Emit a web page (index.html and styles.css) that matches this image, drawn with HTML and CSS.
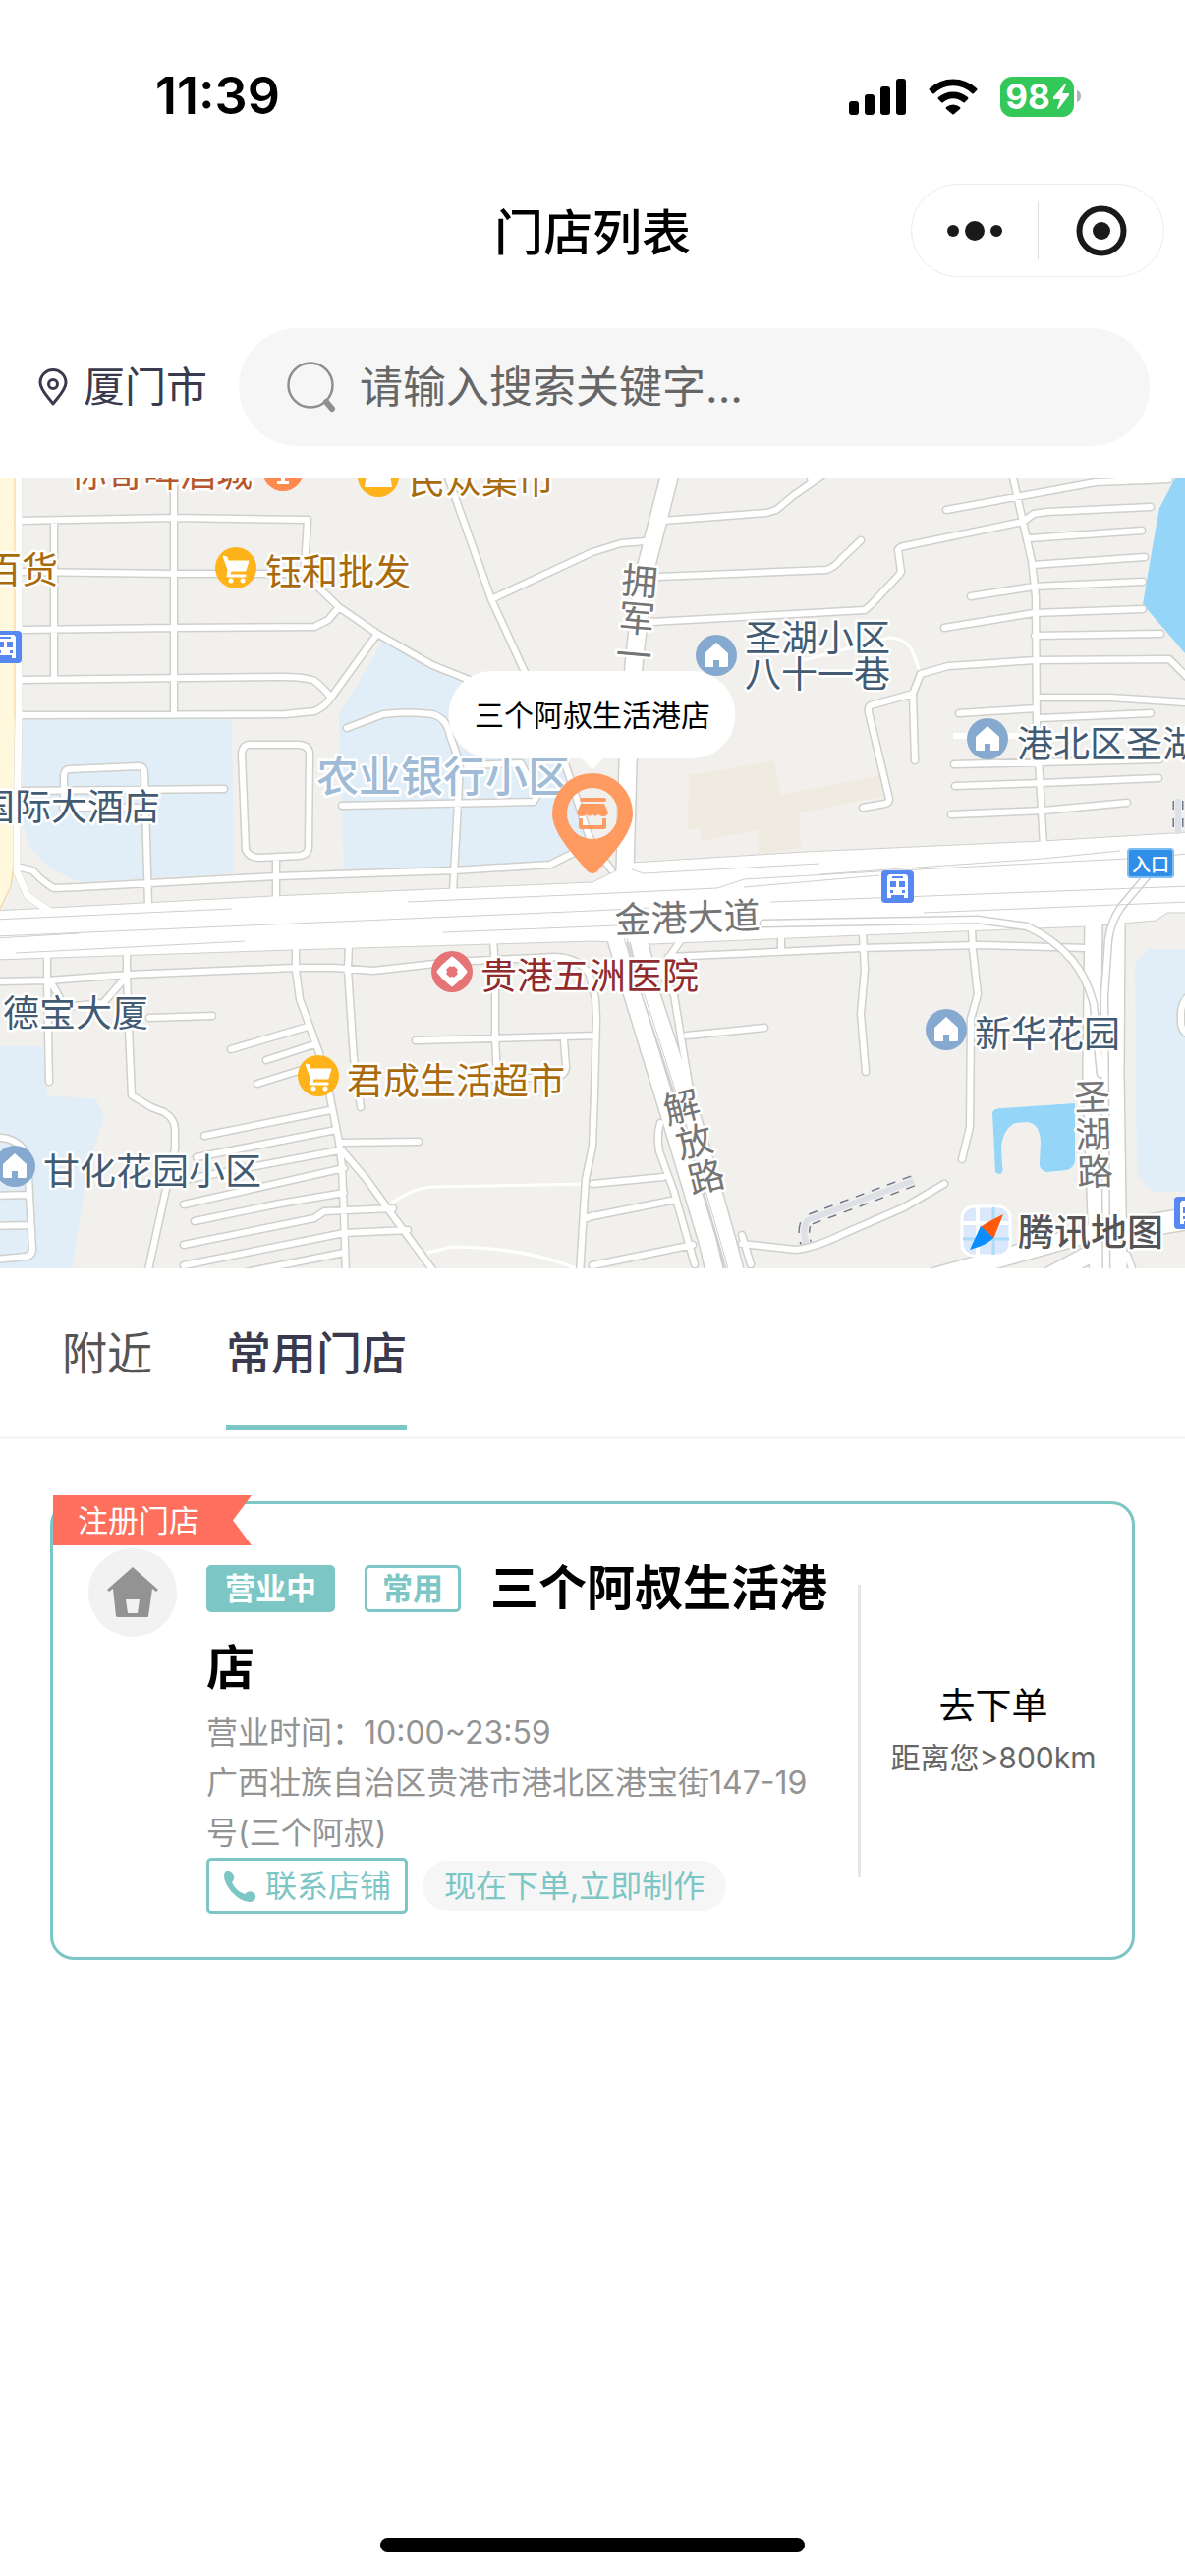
FILE: index.html
```html
<!DOCTYPE html>
<html lang="zh-CN">
<head>
<meta charset="utf-8">
<meta name="viewport" content="width=device-width, initial-scale=1">
<title>门店列表</title>
<link rel="stylesheet" href="styles.css">
</head>
<body>
<header>
  <div class="status-bar">
    <time class="clock">11:39</time>
    <div class="status-icons">
      <svg width="58" height="37" viewBox="0 0 58 37" aria-hidden="true">
        <rect x="0" y="23" width="10" height="14" rx="3"/>
        <rect x="16" y="16" width="10" height="21" rx="3"/>
        <rect x="32" y="8" width="10" height="29" rx="3"/>
        <rect x="48" y="0" width="10" height="37" rx="3"/>
      </svg>
      <svg width="50" height="37" viewBox="0 0 50 37" aria-hidden="true">
        <path d="M1 10 Q0 11 1 12 L4 15 Q5 16 6 15 A27 27 0 0 1 44 15 Q45 16 46 15 L49 12 Q50 11 49 10 A35 35 0 0 0 1 10Z"/>
        <path d="M10 19 Q9 20 10 21 L13 24 Q14 25 15 24 A15 15 0 0 1 35 24 Q36 25 37 24 L40 21 Q41 20 40 19 A23 23 0 0 0 10 19Z"/>
        <path d="M18 29 Q17 30 18 31 L24 36 Q25 37 26 36 L32 31 Q33 30 32 29 A11 11 0 0 0 18 29Z"/>
      </svg>
      <div class="battery">
        <span class="battery-level">98<svg width="16" height="26" viewBox="0 0 16 26" aria-hidden="true"><path d="M12 0 L0 14 Q-1 16 1 16 L7 16 L4 25 Q4 27 6 25 L16 12 Q17 10 15 10 L9 10 L13 1Z"/></svg></span>
        <svg class="battery-tip" width="4" height="12" viewBox="0 0 4 12" aria-hidden="true"><path d="M0 0 Q4 1 4 6 Q4 11 0 12Z"/></svg>
      </div>
    </div>
  </div>
  <div class="nav-bar">
    <h1 class="nav-title">门店列表</h1>
    <div class="capsule">
      <button type="button" class="capsule-button" aria-label="更多">
        <svg width="58" height="20" viewBox="0 0 58 20" aria-hidden="true"><circle cx="7" cy="10" r="6"/><circle cx="29" cy="10" r="10"/><circle cx="51" cy="10" r="6"/></svg>
      </button>
      <button type="button" class="capsule-button" aria-label="关闭">
        <svg width="52" height="52" viewBox="0 0 52 52" aria-hidden="true"><circle cx="26" cy="26" r="22.5" fill="none" stroke="#1a1a1a" stroke-width="6"/><circle cx="26" cy="26" r="9"/></svg>
      </button>
    </div>
  </div>
  <form class="search-row" role="search">
    <button type="button" class="city">
      <svg width="30" height="38" viewBox="0 0 30 38" fill="none" stroke="#3a3a4e" stroke-width="3" aria-hidden="true"><path d="M15 36 C10 29 2 22 2 14.5 A13 13 0 0 1 28 14.500 C28 22 20 29 15 36Z" stroke-linejoin="round"/><circle cx="15" cy="16" r="4.500"/></svg>
      厦门市
    </button>
    <label class="search-box">
      <svg width="50" height="52" viewBox="0 0 50 52" fill="none" stroke="#8f8f8f" aria-hidden="true"><circle cx="24" cy="24" r="22.500" stroke-width="2.500"/><path d="M40 41 L46 48" stroke-width="6" stroke-linecap="round"/></svg>
      <input class="search-input" type="search" aria-label="搜索门店" placeholder="请输入搜索关键字...">
    </label>
  </form>
</header>

<main>
  <svg class="map" viewBox="0 0 1206 804" role="img" aria-label="门店地图">
    <defs>
      <path id="lanes" d="M19 43 L177 40 L313 42 M177 -5 V240 M55 44 V204 M23 95 L177 97 L312 97 M23 154 L177 152 L320 151 L334 144 L345 131
        M313 42 L310 90 L319 106 L345 131 L384 158 L440 190 L500 214 M384 158 L337 223 M20 205 L285 202 Q312 202 320 206 Q328 212 337 223 M19 241 L290 240 L320 237 Q330 233 337 223
        M455 -4 L500 123 L540 210 M500 123 L603 75 L632 66 L657 64 M353 254 L390 240 Q415 237 440 240 Q455 244 458 262 L468 290 L466 330 L461 421
        M348 333 L543 329 L547 322 L530 290 L475 292 M575 290 L600 366 L612 385 L622 398
        M246 280 Q247 271 254 271 L304 271 Q315 272 315 280 L314 376 Q313 383 305 384 L264 386 Q254 386 250 378Z M281 386 V425
        M65 334 L65 302 Q66 296 70 296 L141 293 Q147 293 147 300 L151 434 M23 318 L228 316 M64 335 L147 335
        M21 396 L33 399 Q45 412 55 417 L80 416 L281 405 L462 399 L560 393 L594 376
        M674 43 L780 35 L790 32 L808 17 L840 -5 M824 -5 L826 4 M670 100 L841 93 Q850 90 855 83 L876 63
        M663 146 L880 134 L887 128 L915 98 L917 95 L914 73 Q915 70 920 69 L1041 44 L1052 36 L1065 34 L1171 29
        M1030 -5 L1041 44 L1050 84 L1054 120 L1055 250 L1062 374 M963 32 L1115 4 L1190 1 M1047 61 L1162 53 M1051 88 L1165 80 M988 120 L1052 110 L1163 105 M961 152 L1052 137 L1163 133 M1053 160 L1181 158
        M937 199 L965 191 L1053 185 L1190 184 L1208 202 M937 199 L929 219 L931 287 M929 219 L886 231 Q883 233 884 238 L905 326 Q905 330 901 331 L878 335
        M1055 223 L1130 223 L1208 228 M976 239 L1055 234 M1058 244 L1171 239 M971 291 L1180 286 M972 313 L1060 310 L1179 305 M968 342 L1062 338 L1147 330
        M-5 512 L48 511 L130 505 L300 498 L340 498 L380 501 L460 492 L565 487 Q590 488 600 505 L606 530 L607 550 L605 626 L603 680 L596 713 L590 810
        M48 482 V511 L50 614 M129 478 V505 L131 560 L134 628 L154 640 L167 645 Q178 652 178 662 L178 682 L150 810 M52 513 L66 538 L105 534 L126 510 M152 549 L216 547
        M301 475 L301 500 L305 530 L325 585 L335 625 L345 675 L348 700 L350 750 L352 810 M355 473 L354 500 L360 590 L367 640
        M235 581 L313 558 M271 592 L320 576 M262 616 L310 601 M208 669 L336 643 M200 691 L342 663 M192 713 L345 684 M187 739 L350 702 M198 756 L285 738 L350 727 M187 780 L320 753 L330 746 L400 743 M187 801 L350 768 L415 765 M250 808 L350 788
        M346 676 L426 675 M348 684 L372 712 L398 748 L445 812 M502 468 L504 500 L504 568 L506 610 M423 572 L607 567 M574 572 L576 598 Q576 607 566 609 L490 612
        M598 753 L603 750 M603 718 L675 711 M598 752 L688 734 M603 801 L705 780
        M-5 670 L8 672 Q25 678 28 692 L33 785 Q33 791 26 792 L-5 795 M-5 730 L28 729 M-5 761 L31 760
        M693 470 L672 500 L686 526 L697 593 L707 650 M672 656 Q668 668 671 685 L686 726 L707 800 M680 487 L876 478 L995 475 L1107 478 M795 466 V480 M878 464 L880 500 L876 545 L881 604 M989 458 L990 480 L995 525 L988 550 L987 660 L979 693
        M699 567 L778 559 M755 779 L810 785 Q830 783 860 768 L920 742 L961 718 M755 770 L764 800 M1147 790 L1154 810
        M1215 523 Q1202 530 1202 545 V555 Q1203 565 1215 568"/>
      <path id="roads" d="M682 -5 L655 100 L645 190 L639 290 L636 400 M953 812 L1110 768 M1060 816 L1112 788 M626 465 L644 526 L683 653 L720 776 L728 810 M649 465 L663 526 L705 653 L740 776 L749 810 M1113 448 L1111 606 L1118 810 M1136 448 L1135 606 L1138 810"/>
      <path id="ramps" d="M777 453 L995 449 L1045 456 Q1072 468 1091 490 Q1106 508 1113 535 L1120 606 M1168 404 L1141 436 Q1130 452 1128 470 L1124 526 L1126 810"/>
      <g id="home-poi"><circle r="21" fill="#86a9cf"/><path d="M0 -13 L12 -2 V11 Q12 12 10 12 H3 V5 H-3 V12 H-10 Q-12 12 -12 11 V-2Z" fill="#fff"/></g>
      <g id="cart-poi"><circle r="21" fill="#ffb31a"/><path d="M-13 -12 L-9 -11 L-8 -7 H13 L10 3 H-5 L-6 7 H10 V9 H-9 L-8 2Z" fill="#fff" stroke="#fff" stroke-linejoin="round"/><circle cx="-5" cy="13" r="2.500" fill="#fff"/><circle cx="7" cy="13" r="2.500" fill="#fff"/></g>
      <g id="bus-poi"><rect x="-16" y="-16" width="33" height="33" rx="4" fill="#5787f0"/><path d="M-8 -12 H9 L11 -10 V12 H7 V9 H-6 V12 H-10 V-10Z" fill="#fff"/><path d="M-5 -10 H6 V-8 H-5Z M-7 -5 H-1 V1 H-7Z M2 -5 H8 V1 H2Z M-7 4 H-4 V7 H-7Z M5 4 H8 V7 H5Z" fill="#5787f0"/></g>
    </defs>

    <rect width="1206" height="804" fill="#f1f0ed"/>
    <g fill="#e1eef8">
      <path d="M23 245 H236 L238 402 L85 411 Q45 400 28 370 L23 350Z"/>
      <path d="M390 165 L478 206 L577 286 L605 375 L560 392 L350 399 L345 240Z"/>
      <path d="M0 578 L43 578 L48 628 L98 632 L106 650 L90 700 L73 804 H0Z"/>
      <path d="M1168 479 H1206 V726 H1173 L1157 710 L1155 495Z"/>
    </g>
    <path d="M702 302 L788 287 L795 322 L896 302 L901 323 L813 341 L815 376 L772 382 L771 358 L713 369 V357 H699Z" fill="#efebe0"/>
    <g fill="#95d5f8">
      <path d="M1206 -2 H1197 L1180 30 L1172 75 L1163 128 L1206 178Z"/>
      <path d="M1010 645 Q1012 641 1020 641 L1094 636 V695 Q1092 703 1085 704 L1065 706 Q1057 703 1058 697 L1059 675 Q1058 656 1045 655 L1033 656 Q1021 662 1019 680 L1020 700 Q1022 707 1017 708 L1013 706Z"/>
    </g>
    <path d="M-2 -2 H15 V240 L18 320 L17 370 L11 415 L-2 442Z" fill="#fff8dc" stroke="#f3cf8c" stroke-width="1"/>
    <path d="M19 -5 V245 L17 360 V400 L28 425 L50 440" fill="none" stroke="#d2d2cf" stroke-width="8"/>
    <g fill="none" stroke="#fff" stroke-width="3">
      <path d="M818 185 L905 162 Q925 163 930 180 L937 199"/><path d="M398 738 Q420 722 440 721 L600 718"/><path d="M435 788 L460 782 Q540 783 590 806"/><path d="M970 262 L1175 262" stroke-width="6"/>
    </g>
    <g fill="none" stroke-linecap="round" stroke-linejoin="round">
      <use href="#lanes" stroke="#cfcfcc" stroke-width="9"/>
      <use href="#roads" stroke="#cfcfcc" stroke-width="20"/>
      <path d="M1140 765 L1212 753" stroke="#cfcfcc" stroke-width="24"/>
    </g>
    <path d="M-5 440 L277 425 L603 411 L643 391 L820 380 L1061 369 L1210 360 V442 H1188 L1176 450 L1107 456 L876 465 L664 474 L603 471 L296 480 L-5 490Z" fill="#fff" stroke="#cfcfcc" stroke-width="1"/>
    <g fill="none" stroke="#fff" stroke-linecap="round" stroke-linejoin="round">
      <use href="#roads" stroke-width="17"/>
      <use href="#lanes" stroke-width="6"/>
      <path d="M19 -5 V245 L17 360 V400 L28 425 L50 440" stroke-width="7"/>
      <path d="M1140 765 L1212 753" stroke-width="21"/>
      <use href="#ramps" stroke="#cfcfcc" stroke-width="9"/>
      <use href="#ramps" stroke-width="6"/>
    </g>
    <path d="M-5 449 L236 438 M-5 466 L603 440 L660 437 M784 431 L1210 415 M-5 468 L80 463 M415 431 L603 423 L730 417 L757 408 L895 400 L1147 387 L1210 382 M16 483 L249 471 M451 462 L603 456 L628 455 M940 442 L1210 431 M834 403 L1061 387 L1140 379 M757 416 L895 404 M643 398 L655 402 L834 392" fill="none" stroke="#cfcfcc"/>
    <g fill="none" stroke="#cfcfcc">
      <path d="M635 468 L653 526 L694 653 L731 776 L739 804 M638 468 L656 526 L697 653 L733 776 L741 804"/>
    </g>
    <g fill="none">
      <path d="M929 715 L822 755 Q816 762 820 778" stroke="#73778c" stroke-width="12" stroke-dasharray="9 8"/>
      <path d="M929 715 L822 755 Q816 762 820 778" stroke="#f1f0ed" stroke-width="9"/>
      <path d="M929 715 L822 755 Q816 762 820 778" stroke="#dde0e7" stroke-width="6"/>
      <path d="M1199 328 V360" stroke="#73778c" stroke-width="11" stroke-dasharray="9 9"/>
      <path d="M1199 326 V362" stroke="#f1f0ed" stroke-width="8"/>
      <path d="M1199 326 V362" stroke="#dde0e7" stroke-width="6"/>
    </g>

    <use href="#home-poi" x="729" y="180"/><use href="#home-poi" x="1005" y="265"/><use href="#home-poi" x="15" y="700"/><use href="#home-poi" x="963" y="561"/>
    <use href="#cart-poi" x="240" y="91"/><use href="#cart-poi" x="324" y="608"/>
    <use href="#bus-poi" x="5" y="171"/><use href="#bus-poi" x="913" y="415"/><use href="#bus-poi" x="1211" y="747"/>
    <circle cx="385" cy="-2" r="21" fill="#ffb31a"/><path d="M374 -10 H396 L399 9 H371Z" fill="#fff"/>
    <circle cx="288" cy="-8" r="21" fill="#ff8a50"/><path d="M286 -10 H290 V3 H294 V6 H282 V3 H286Z" fill="#fff"/>
    <circle cx="460" cy="502" r="21" fill="#e67476"/><path d="M460 488 L466 493 L469 496 L474 502 L469 508 L460 516 L451 508 L446 502 L451 496Z" fill="#fff" stroke="#fff" stroke-width="3" stroke-linejoin="round"/><path d="M460 497 V507 M455 502 H465 M456 498 L464 506 M464 498 L456 506" stroke="#e67476" stroke-width="6"/>
    <rect x="1148" y="377" width="46" height="29" rx="3" fill="#2f8fe8" stroke="#7ebcf2" stroke-width="2"/>
    <text x="1171" y="400" class="map-sign">入口</text>

    <g class="map-label shop"><text x="270" y="109">钰和批发</text><text x="-15" y="107">百货</text><text x="416" y="16">民众集市</text><text x="353" y="627">君成生活超市</text></g>
    <g class="map-label food"><text x="72" y="9">你哥啤酒城</text></g>
    <g class="map-label clinic"><text x="489" y="520">贵港五洲医院</text></g>
    <g class="map-label place"><text x="-22" y="348">国际大酒店</text><text x="758" y="176">圣湖小区</text><text x="758" y="213">八十一巷</text><text x="1035" y="284">港北区圣湖</text><text x="3" y="558">德宝大厦</text><text x="44" y="719">甘化花园小区</text><text x="992" y="579">新华花园</text></g>
    <text x="322" y="319" class="map-label area">农业银行小区</text>
    <g class="map-label road">
      <text transform="translate(626 463) rotate(-2)">金港大道</text>
      <g text-anchor="middle">
        <text transform="translate(650 118) rotate(5)">拥</text><text transform="translate(647 156) rotate(5)">军</text><text transform="translate(644 193) rotate(5)">一</text>
        <text transform="translate(697 653) rotate(-14)">解</text><text transform="translate(710 688) rotate(-14)">放</text><text transform="translate(722 724) rotate(-14)">路</text>
        <text transform="translate(1112 643) rotate(-2)">圣</text><text transform="translate(1113 681) rotate(-2)">湖</text><text transform="translate(1115 719) rotate(-2)">路</text>
      </g>
    </g>

    <g>
      <rect x="979" y="741" width="49" height="50" rx="12" fill="#dbe8fb" stroke="#fff" stroke-width="3"/>
      <path d="M995 742 V790 M980 758 H1027" stroke="#fff" stroke-width="4"/><path d="M1011 742 V790 M980 774 H1027" stroke="#a9dcfb" stroke-width="3"/>
      <path d="M1021 749 L1011 774 L998 762 Q1004 757 1021 749Z" fill="#ff5a0a"/><path d="M987 785 L998 761 L1011 773 Q1005 780 987 785Z" fill="#0a8dff"/>
      <text x="1036" y="781" class="map-label brand">腾讯地图</text>
    </g>

    <path d="M501 196 H704 A44 44 0 0 1 704 285 H614 L603 296 L592 285 H501 A44 44 0 0 1 501 196Z" fill="#fff"/>
    <text x="603" y="252" class="callout">三个阿叔生活港店</text>
    <path fill-rule="evenodd" d="M598 400 C585 384 562 362 562 341 A41 41 0 0 1 644 341 C644 362 621 384 608 400 Q603 404 598 400Z M603 315 A26 26 0 1 0 603 367 A26 26 0 1 0 603 315Z" fill="#ff9a61"/>
    <path d="M592 325 H615 Q617 325 617 327 Q617 329 615 329 H592 Q590 329 590 327 Q590 325 592 325Z M591 331 H615 L619 340 Q618 344 614 344 Q611 344 609 342 Q606 345 603 342 Q600 345 597 342 Q595 344 592 344 Q588 344 587 340Z" fill="#ff9a61"/>
    <path d="M591 346 V355 H615 V346" fill="none" stroke="#ff9a61" stroke-width="4" stroke-linejoin="round"/>
  </svg>

  <nav class="tabs">
    <a class="tab" href="#nearby">附近</a>
    <a class="tab tab-active" href="#frequent" aria-current="page">常用门店</a>
  </nav>

  <section class="stores" id="frequent">
    <article class="store-card">
      <span class="ribbon">注册门店</span>
      <svg class="store-icon" viewBox="0 0 90 90" aria-hidden="true"><circle cx="45" cy="45" r="45" fill="#f2f2f2"/><path d="M45 19 L71 42 L69 44 L65 41 L61 69 Q61 70 60 70 H30 Q29 70 28 69 L25 41 L21 44 L19 42Z" fill="#939393"/><path d="M38 52 H52 L50 66 H40Z" fill="#f2f2f2"/></svg>
      <div class="store-info">
        <h2 class="store-name"><span class="tag tag-open">营业中</span><span class="tag tag-frequent">常用</span>三个阿叔生活港店</h2>
        <p class="store-text">营业时间：10:00~23:59</p>
        <p class="store-text">广西壮族自治区贵港市港北区港宝街147-19号(三个阿叔)</p>
        <div class="store-actions">
          <button type="button" class="contact"><svg width="34" height="34" viewBox="0 0 34 34" aria-hidden="true"><path d="M1 6 Q1 1 5 1 Q9 1 11 6 Q12 10 9 13 Q13 22 22 25 Q26 21 30 23 Q34 25 33 29 Q32 33 27 33 Q18 33 8 22 Q1 13 1 6Z"/></svg>联系店铺</button>
          <span class="notice">现在下单,立即制作</span>
        </div>
      </div>
      <a class="order" href="#order">
        <span class="order-title">去下单</span>
        <span class="order-distance">距离您&gt;800km</span>
      </a>
    </article>
  </section>
</main>
<div class="home-indicator"></div>
</body>
</html>
```
FILE: styles.css
```css
* {
  box-sizing: border-box;
}

body {
  display: flex;
  flex-direction: column;
  min-height: 100vh;
  margin: 0;
  background: #fff;
  color: #000;
  font-family: Inter, "Noto Sans CJK SC", sans-serif;
}

h1, h2, p {
  margin: 0;
}

button {
  padding: 0;
  border: 0;
  background: none;
  color: inherit;
  font: inherit;
}

a {
  color: inherit;
  text-decoration: none;
}

.status-bar {
  display: flex;
  align-items: center;
  justify-content: space-between;
  padding: 68px 106px 0 158px;
}

.clock {
  font-size: 52px;
  font-weight: 600;
  line-height: 60px;
}

.status-icons {
  display: flex;
  align-items: center;
  gap: 23px;
}

.battery {
  display: flex;
  align-items: center;
  gap: 3px;
}

.battery-level {
  display: flex;
  align-items: center;
  justify-content: center;
  gap: 3px;
  width: 75px;
  height: 41px;
  border-radius: 12px;
  background: #34c759;
  color: #fff;
  fill: #fff;
  font-size: 35px;
  font-weight: 700;
}

.battery-tip {
  fill: #b3b3b3;
}

.nav-bar {
  display: grid;
  grid-template-columns: 1fr auto 1fr;
  align-items: center;
  padding: 59px 21px 52px;
}

.nav-title {
  grid-column: 2;
  padding-top: 4px;
  font-size: 50px;
  font-weight: 500;
  line-height: 72px;
}

.capsule {
  display: grid;
  grid-template-columns: 1fr 1fr;
  justify-self: end;
  width: 258px;
  height: 95px;
  padding: 17px 0;
  border: 1px solid #ebebeb;
  border-radius: 48px;
  fill: #1a1a1a;
}

.capsule-button {
  display: flex;
  align-items: center;
  justify-content: center;
}

.capsule-button + .capsule-button {
  border-left: 1px solid #dedede;
}

.search-row {
  display: flex;
  align-items: center;
  gap: 32px;
  padding: 0 36px 33px 39px;
}

.city {
  display: flex;
  align-items: center;
  gap: 16px;
  color: #3a3a4e;
  font-size: 42px;
  line-height: 60px;
}

.search-box {
  display: flex;
  flex: 1;
  align-items: center;
  gap: 24px;
  height: 120px;
  padding: 0 49px;
  border-radius: 60px;
  background: #f6f6f6;
}

.search-input {
  flex: 1;
  min-width: 0;
  padding: 0;
  border: 0;
  outline: 0;
  background: none;
  color: #333;
  font: inherit;
  font-size: 44px;
}

.search-input::placeholder {
  color: #666;
}

.map {
  display: block;
  width: 100%;
}

.map text {
  font-family: "Noto Sans CJK SC", sans-serif;
}

.map-label {
  stroke: #fff;
  stroke-width: 5px;
  stroke-linejoin: round;
  paint-order: stroke;
  font-size: 37px;
}

.shop { fill: #a96a0c; }
.food { fill: #b5582d; }
.clinic { fill: #912c2e; }
.place { fill: #425b73; }
.road { fill: #757575; }

.area {
  fill: #a0bbd6;
  font-size: 43px;
  font-weight: 500;
}

.brand {
  fill: #555;
  font-weight: 500;
}

.map-sign {
  fill: #fff;
  font-size: 19px;
  font-weight: 500;
  text-anchor: middle;
}

.callout {
  font-size: 30px;
  text-anchor: middle;
}

.tabs {
  display: flex;
  gap: 75px;
  padding: 45px 63px 6px;
  border-bottom: 3px solid #f5f5f5;
}

.tab {
  height: 120px;
  color: #555;
  font-size: 46px;
  line-height: 82px;
}

.tab-active {
  border-bottom: 6px solid #7cc6c5;
  color: #3a3a4e;
  font-weight: 500;
}

.stores {
  padding: 63px 51px;
}

.store-card {
  position: relative;
  display: grid;
  grid-template-columns: 90px minmax(0, 1fr) auto;
  column-gap: 24px;
  padding: 45px 0 44px 36px;
  border: 3px solid #7cc6c5;
  border-radius: 24px;
}

.ribbon {
  position: absolute;
  top: -9px;
  left: 0;
  padding: 0 53px 0 25px;
  background: #ff6f5e;
  clip-path: polygon(0 0, 100% 0, calc(100% - 19px) 50%, 100% 100%, 0 100%);
  color: #fff;
  font-size: 31px;
  line-height: 51px;
}

.store-icon {
  width: 90px;
}

.store-info {
  margin-left: 6px;
}

.store-name {
  font-size: 49px;
  font-weight: 700;
  line-height: 81px;
}

.tag {
  display: inline-block;
  margin-right: 30px;
  border: 3px solid #7cc6c5;
  border-radius: 5px;
  font-size: 31px;
  line-height: 42px;
  vertical-align: 6px;
}

.tag-open {
  padding: 0 16px;
  background: #7cc6c5;
  color: #fff;
}

.tag-frequent {
  padding: 0 15px;
  color: #7cc6c5;
}

.store-text {
  color: #939393;
  font-size: 32px;
  line-height: 51px;
}

.store-actions {
  display: flex;
  align-items: center;
  gap: 15px;
  color: #7cc6c5;
  font-size: 32px;
  line-height: 51px;
}

.contact {
  display: flex;
  align-items: center;
  gap: 9px;
  padding: 0 14px;
  border: 3px solid #7cc6c5;
  border-radius: 5px;
  fill: #7cc6c5;
}

.notice {
  padding: 0 22px;
  border-radius: 26px;
  background: #f6f6f6;
}

.order {
  display: flex;
  flex-direction: column;
  align-items: center;
  align-self: center;
  justify-content: center;
  min-width: 279px;
  height: 298px;
  padding-right: 6px;
  border-left: 3px solid #e6e6e6;
}

.order-title {
  font-size: 37px;
  line-height: 54px;
}

.order-distance {
  color: #666;
  font-size: 30px;
  line-height: 51px;
}

.home-indicator {
  width: 432px;
  height: 15px;
  margin: auto auto 24px;
  border-radius: 8px;
  background: #000;
}
```
